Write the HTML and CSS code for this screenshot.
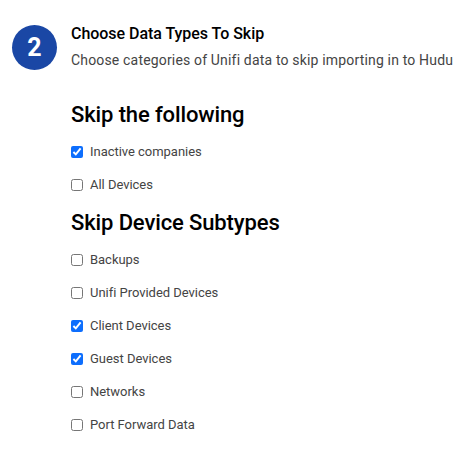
FILE: index.html
```html
<!DOCTYPE html>
<html>
  <head>
    <meta charset="utf-8" />
    <title>Choose Data Types To Skip</title>
    <link rel="stylesheet" href="styles.css">
  </head>
  <body>
    <div class="step">
      <div class="step-number">2</div>
      <div class="step-body">
        <div class="step-title">Choose Data Types To Skip</div>
        <div class="step-desc">Choose categories of Unifi data to skip importing in to Hudu</div>

        <h2>Skip the following</h2>
        <label class="check"><input type="checkbox" checked /> Inactive companies</label>
        <label class="check"><input type="checkbox" /> All Devices</label>

        <h2 class="second">Skip Device Subtypes</h2>
        <label class="check"><input type="checkbox" /> Backups</label>
        <label class="check"><input type="checkbox" /> Unifi Provided Devices</label>
        <label class="check"><input type="checkbox" checked /> Client Devices</label>
        <label class="check"><input type="checkbox" checked /> Guest Devices</label>
        <label class="check"><input type="checkbox" /> Networks</label>
        <label class="check"><input type="checkbox" /> Port Forward Data</label>
      </div>
    </div>
  </body>
</html>
```

FILE: styles.css
```css
body {
  margin: 0;
  font-family: Roboto, "Liberation Sans", sans-serif;
  color: #444;
  background: #fff;
}
.step {
  display: flex;
  gap: 14px;
  padding: 24px 0 0 12px;
  white-space: nowrap;
}
.step-number {
  flex: none;
  width: 45px;
  height: 45px;
  margin-top: 1px;
  border-radius: 50%;
  background: #1a47a5;
  color: #fff;
  font-size: 25px;
  font-weight: 700;
  line-height: 45px;
  text-align: center;
}
.step-title {
  font-size: 16px;
  font-weight: 500;
  line-height: 19px;
  letter-spacing: -0.04px;
  color: #000;
}
.step-desc {
  margin-top: 8px;
  font-size: 14px;
  line-height: 18px;
  letter-spacing: 0.17px;
}
h2 {
  margin: 33px 0 15px;
  font-size: 22px;
  font-weight: 500;
  line-height: 26px;
  letter-spacing: -0.12px;
  color: #000;
}
h2.second {
  margin: 17px 0 15px;
}
.check {
  display: flex;
  align-items: center;
  gap: 7px;
  height: 17px;
  margin-bottom: 16px;
  font-size: 13px;
  letter-spacing: -0.03px;
}
.check input {
  width: 12px;
  height: 12px;
  margin: 0;
  accent-color: #0d6efd;
}
```
